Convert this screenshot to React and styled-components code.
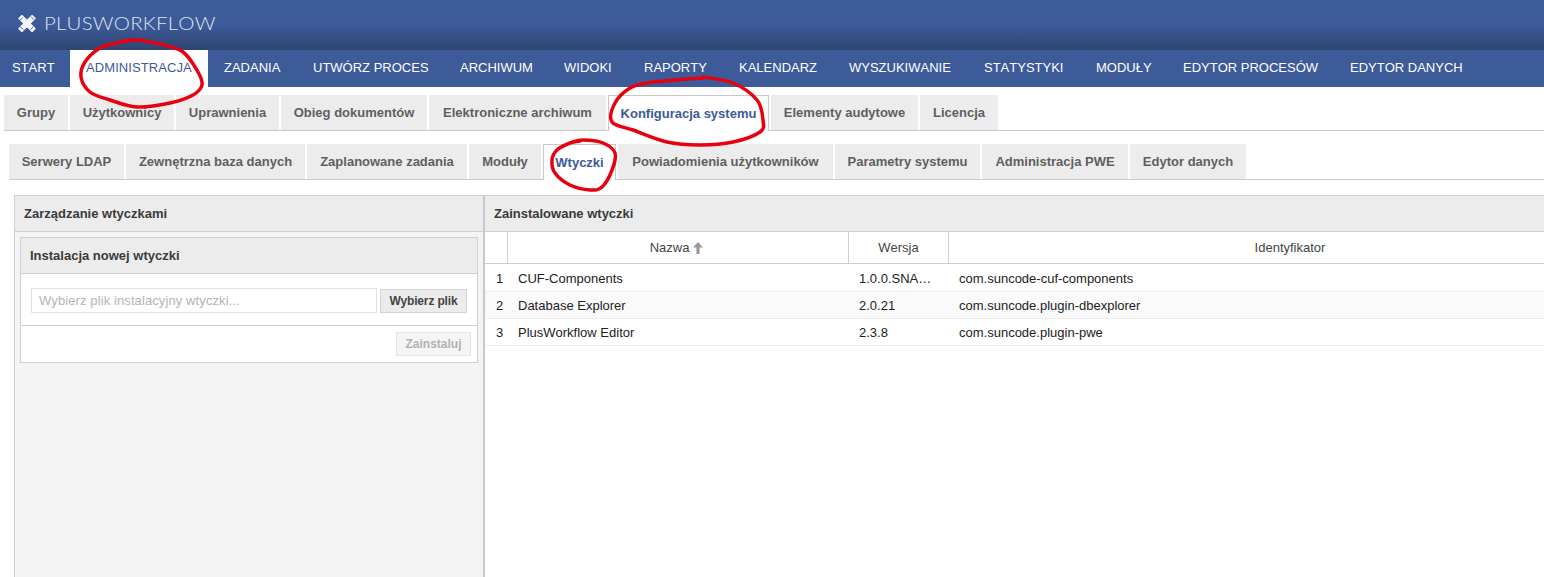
import styled, { createGlobalStyle } from 'styled-components';

const GlobalStyle = createGlobalStyle`
  html, body {
    margin: 0;
    padding: 0;
    height: 100%;
    overflow: hidden;
    background: #fff;
    font-family: 'Liberation Sans', Arial, sans-serif;
    font-kerning: none;
  }
`;

const Page = styled.div`
  position: relative;
  width: 1544px;
  height: 577px;
  overflow: hidden;
`;

const Header = styled.header`
  height: 50px;
  display: flex;
  align-items: center;
  gap: 8px;
  padding: 0 0 3px 18px;
  box-sizing: border-box;
  background: linear-gradient(to bottom, #3d5a99 0%, #3d5a99 50%, #2f4672 100%);
`;

const LogoText = styled.span`
  display: inline-block;
  font-family: 'Lato', sans-serif;
  font-weight: 300;
  font-size: 17px;
  letter-spacing: 0.2px;
  color: #dfe5f0;
  transform: scaleX(1.2);
  transform-origin: left center;
`;

const MainNav = styled.nav`
  height: 37px;
  display: flex;
  background: #3d5a99;
`;

const NavItem = styled.a`
  display: flex;
  align-items: center;
  box-sizing: border-box;
  width: ${props => props.$width}px;
  padding-left: ${props => props.$indent}px;
  padding-bottom: 2px;
  font-size: 13px;
  white-space: nowrap;
  letter-spacing: ${props => (props.$active ? '0.08px' : '0')};
  color: ${props => (props.$active ? '#3d5a99' : '#fff')};
  background: ${props => (props.$active ? '#fff' : 'transparent')};
`;

const TabBar = styled.div`
  display: flex;
  gap: 2px;
  height: 36px;
  box-sizing: border-box;
  margin: ${props => props.$margin};
  border-bottom: 1px solid #c8c8c8;
`;

const Tab = styled.a`
  display: flex;
  align-items: center;
  justify-content: center;
  box-sizing: border-box;
  height: ${props => (props.$active ? '36px' : '35px')};
  width: ${props => props.$width}px;
  font-size: 13px;
  font-weight: 700;
  color: ${props => (props.$active ? '#3d5a99' : '#5f5f5f')};
  background: ${props => (props.$active ? '#fff' : '#ececec')};
  border: ${props => (props.$active ? '1px solid #c8c8c8' : 'none')};
  border-bottom: none;
`;

const Panels = styled.div`
  display: flex;
  height: 382px;
  margin: 15px 0 0 14px;
  box-sizing: border-box;
  border-top: 1px solid #d0d0d0;
`;

const LeftPanel = styled.section`
  width: 469px;
  box-sizing: border-box;
  background: #f4f4f4;
  border-left: 1px solid #d0d0d0;
`;

const Splitter = styled.div`
  width: 2px;
  background: #c8c8c8;
`;

const RightPanel = styled.section`
  flex: 1;
  min-width: 0;
  background: #fff;
`;

const PanelTitle = styled.h2`
  margin: 0;
  height: 36px;
  display: flex;
  align-items: center;
  padding-left: 9px;
  box-sizing: border-box;
  font-size: 13px;
  font-weight: 700;
  color: #3a3a3a;
  background: #ececec;
  border-bottom: 1px solid #cfcfcf;
`;

const InstallBox = styled.div`
  margin: 5px 5px 0 5px;
  height: 126px;
  box-sizing: border-box;
  background: #fff;
  border: 1px solid #cfcfcf;
`;

const BoxTitle = styled.h3`
  margin: 0;
  height: 36px;
  display: flex;
  align-items: center;
  padding-left: 9px;
  box-sizing: border-box;
  font-size: 13px;
  font-weight: 700;
  color: #3a3a3a;
  background: #ececec;
  border-bottom: 1px solid #cfcfcf;
`;

const FileRow = styled.div`
  height: 52px;
  display: flex;
  align-items: center;
  gap: 3px;
  padding: 2px 10px 0 10px;
  box-sizing: border-box;
  border-bottom: 1px solid #cfcfcf;
`;

const FileInput = styled.div`
  flex: 1;
  height: 25px;
  display: flex;
  align-items: center;
  padding-left: 7px;
  box-sizing: border-box;
  font-size: 13px;
  letter-spacing: 0.1px;
  color: #b4b4b4;
  border: 1px solid #e0e0e0;
`;

const Button = styled.button`
  height: 24px;
  padding: 0;
  width: ${props => props.$width}px;
  font-family: inherit;
  font-size: 12px;
  font-weight: 700;
  letter-spacing: ${props => (props.$disabled ? '0' : '-0.15px')};
  color: ${props => (props.$disabled ? '#b2b2b2' : '#444')};
  background: ${props => (props.$disabled ? '#f5f5f5' : '#ececec')};
  border: 1px solid ${props => (props.$disabled ? '#e4e4e4' : '#d4d4d4')};
`;

const BoxFooter = styled.div`
  display: flex;
  justify-content: flex-end;
  padding: 6px 6px 0 0;
`;

const Table = styled.div`
  display: grid;
  grid-template-columns: 23px 341px 100px 683px;
`;

const HeadCell = styled.div`
  height: 32px;
  display: flex;
  align-items: center;
  justify-content: center;
  gap: 4px;
  box-sizing: border-box;
  font-size: 13px;
  color: #444;
  background: #fff;
  border-bottom: 1px solid #cfcfcf;
  border-right: 1px solid #cfcfcf;
`;

const Cell = styled.div`
  height: ${props => (props.$first ? '28px' : '27px')};
  display: flex;
  align-items: center;
  padding-left: ${props => (props.$number ? '11px' : '10px')};
  padding-top: ${props => (props.$first ? '1px' : '0')};
  box-sizing: border-box;
  font-size: 13px;
  color: #222;
  background: ${props => (props.$odd ? '#fafafa' : '#fff')};
  border-bottom: 1px solid #ececec;
`;

const ArrowIcon = styled.svg`
  margin-right: 3px;
`;

const Annotation = styled.svg`
  position: absolute;
  left: 0;
  top: 0;
  pointer-events: none;
`;

const RedStroke = styled.path`
  fill: none;
  stroke: #e8000e;
  stroke-width: 3.5px;
  stroke-linecap: round;
  stroke-linejoin: round;
`;

const navItems = [
  ['START', 70, 12], ['ADMINISTRACJA', 138, 16], ['ZADANIA', 89, 16], ['UTWÓRZ PROCES', 147, 16],
  ['ARCHIWUM', 104, 16], ['WIDOKI', 80, 16], ['RAPORTY', 95, 16], ['KALENDARZ', 110, 16],
  ['WYSZUKIWANIE', 135, 16], ['STATYSTYKI', 112, 16], ['MODUŁY', 87, 16], ['EDYTOR PROCESÓW', 167, 16], ['EDYTOR DANYCH', 145, 16],
];

const firstTabs = [
  ['Grupy', 64], ['Użytkownicy', 104], ['Uprawnienia', 103], ['Obieg dokumentów', 146],
  ['Elektroniczne archiwum', 177], ['Konfiguracja systemu', 161, true], ['Elementy audytowe', 147], ['Licencja', 78],
];

const secondTabs = [
  ['Serwery LDAP', 115], ['Zewnętrzna baza danych', 179], ['Zaplanowane zadania', 160], ['Moduły', 72],
  ['Wtyczki', 73, true], ['Powiadomienia użytkowników', 215], ['Parametry systemu', 145], ['Administracja PWE', 146], ['Edytor danych', 116],
];

const plugins = [
  ['CUF-Components', '1.0.0.SNA…', 'com.suncode-cuf-components'],
  ['Database Explorer', '2.0.21', 'com.suncode.plugin-dbexplorer'],
  ['PlusWorkflow Editor', '2.3.8', 'com.suncode.plugin-pwe'],
];

// hand-drawn marks, traced from the screenshot
const circles = [
  [[117, 43], [133, 40], [160, 44], [183, 52], [198, 72], [202, 85], [193, 95], [170, 103], [137, 107], [110, 100], [90, 92], [81, 77], [85, 62], [100, 48], [117, 43], [128, 41]],
  [[703, 77], [733, 83], [757, 100], [763, 120], [760, 132], [733, 142], [700, 145], [667, 142], [633, 130], [612, 122], [615, 103], [630, 88], [647, 83], [677, 80], [703, 78]],
  [[570, 143], [583, 140], [603, 143], [615, 153], [612, 170], [602, 187], [590, 190], [570, 185], [555, 173], [552, 160], [557, 150], [570, 143], [580, 141]],
];

function smoothPath(points) {
  let d = `M${points[0][0]} ${points[0][1]}`;
  for (let i = 0; i < points.length - 1; i++) {
    const p0 = points[i - 1] || points[i];
    const p1 = points[i];
    const p2 = points[i + 1];
    const p3 = points[i + 2] || p2;
    const c1x = p1[0] + (p2[0] - p0[0]) / 6;
    const c1y = p1[1] + (p2[1] - p0[1]) / 6;
    const c2x = p2[0] - (p3[0] - p1[0]) / 6;
    const c2y = p2[1] - (p3[1] - p1[1]) / 6;
    d += ` C${c1x} ${c1y} ${c2x} ${c2y} ${p2[0]} ${p2[1]}`;
  }
  return d;
}

function LogoIcon() {
  return (
    <svg width="18" height="17" viewBox="0 0 18 17">
      <g fill="#f4f6fa">
        <rect x="-1" y="5.7" width="20" height="5.6" rx="1" transform="rotate(-45 9 8.5)" />
        <rect x="-1" y="5.7" width="20" height="5.6" rx="1" transform="rotate(45 9 8.5)" />
      </g>
      <path d="M13 1.6 L16 4.6 M1.8 5.4 L4.6 2.6 M12.6 14.4 L15.2 11.8 M2.2 11.6 L5.2 14.6" stroke="#3d5a99" strokeWidth="1" />
    </svg>
  );
}

function SortArrow() {
  return (
    <ArrowIcon width="10" height="12" viewBox="0 0 10 12">
      <path d="M5 0 L10 5.5 H6.6 V12 H3.4 V5.5 H0 Z" fill="#999" />
    </ArrowIcon>
  );
}

export default function App() {
  return (
    <Page>
      <GlobalStyle />
      <Header>
        <LogoIcon />
        <LogoText>PLUSWORKFLOW</LogoText>
      </Header>
      <MainNav>
        {navItems.map(([label, width, indent]) => (
          <NavItem key={label} $width={width} $indent={indent} $active={label === 'ADMINISTRACJA'}>{label}</NavItem>
        ))}
      </MainNav>
      <TabBar $margin="8px 0 0 4px">
        {firstTabs.map(([label, width, active]) => (
          <Tab key={label} $width={width} $active={active}>{label}</Tab>
        ))}
      </TabBar>
      <TabBar $margin="13px 0 0 9px">
        {secondTabs.map(([label, width, active]) => (
          <Tab key={label} $width={width} $active={active}>{label}</Tab>
        ))}
      </TabBar>
      <Panels>
        <LeftPanel>
          <PanelTitle>Zarządzanie wtyczkami</PanelTitle>
          <InstallBox>
            <BoxTitle>Instalacja nowej wtyczki</BoxTitle>
            <FileRow>
              <FileInput>Wybierz plik instalacyjny wtyczki...</FileInput>
              <Button $width={87}>Wybierz plik</Button>
            </FileRow>
            <BoxFooter>
              <Button $width={75} $disabled>Zainstaluj</Button>
            </BoxFooter>
          </InstallBox>
        </LeftPanel>
        <Splitter />
        <RightPanel>
          <PanelTitle>Zainstalowane wtyczki</PanelTitle>
          <Table>
            <HeadCell />
            <HeadCell>Nazwa <SortArrow /></HeadCell>
            <HeadCell>Wersja</HeadCell>
            <HeadCell>Identyfikator</HeadCell>
            {plugins.map(([name, version, id], index) => [
              <Cell key={name + 'n'} $number $first={index === 0} $odd={index === 1}>{index + 1}</Cell>,
              <Cell key={name} $first={index === 0} $odd={index === 1}>{name}</Cell>,
              <Cell key={name + 'v'} $first={index === 0} $odd={index === 1}>{version}</Cell>,
              <Cell key={name + 'i'} $first={index === 0} $odd={index === 1}>{id}</Cell>,
            ])}
          </Table>
        </RightPanel>
      </Panels>
      <Annotation width="1544" height="577" viewBox="0 0 1544 577">
        {circles.map(points => (
          <RedStroke key={points[0][0]} d={smoothPath(points)} />
        ))}
      </Annotation>
    </Page>
  );
}
